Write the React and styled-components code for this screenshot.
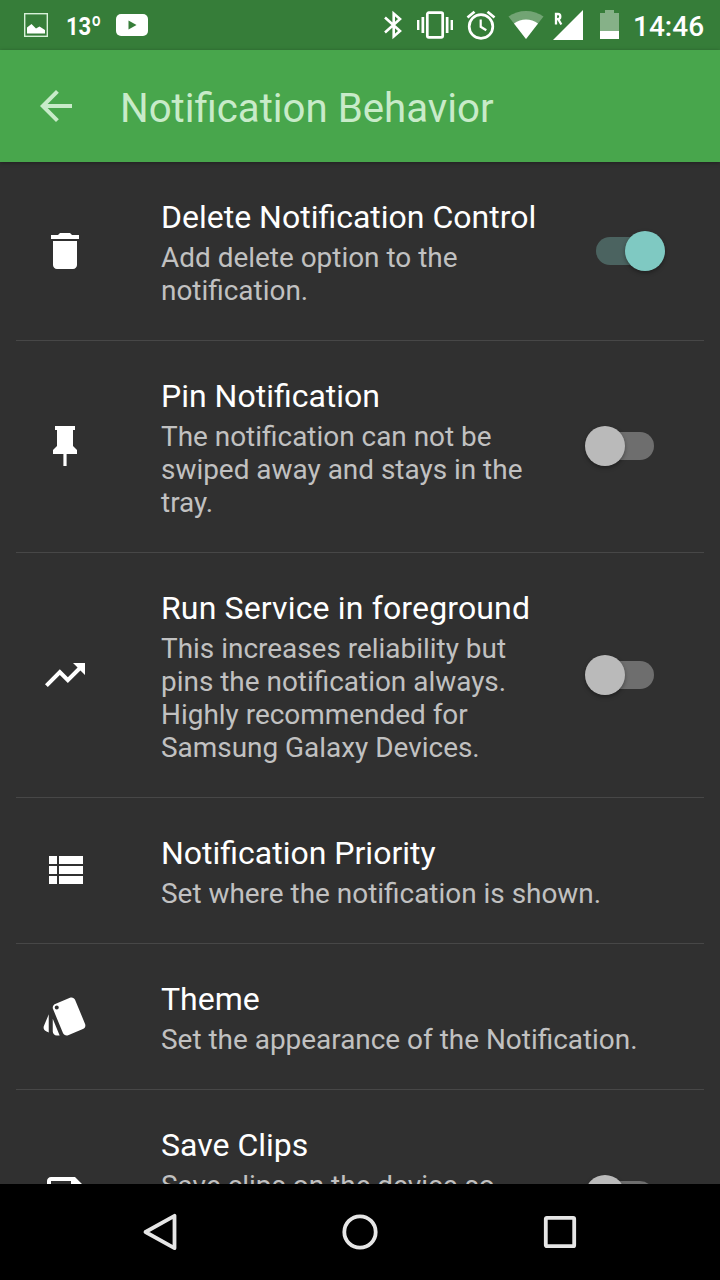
import React from 'react';
import styled, { createGlobalStyle } from 'styled-components';

const GlobalStyle = createGlobalStyle`
  *, *::before, *::after { box-sizing: border-box; }
  body {
    margin: 0;
    background: #303030;
    font-family: Roboto, "Noto Sans", sans-serif;
  }
  svg { display: block; flex: none; }
`;

const Screen = styled.div`
  display: flex;
  flex-direction: column;
  width: 720px;
  height: 1280px;
  overflow: hidden;
  background: #303030;
`;

const StatusBar = styled.header`
  flex: none;
  display: flex;
  align-items: center;
  justify-content: space-between;
  height: 50px;
  padding: 0 16px 0 24px;
  background: #367d39;
  color: #fff;
`;

const StatusGroup = styled.div`
  display: flex;
  align-items: center;
  height: 50px;
`;

const Temperature = styled.span`
  width: 36px;
  margin: 1px 14px 0 18px;
  font-size: 26.5px;
  font-weight: 700;
  line-height: 40px;
  white-space: nowrap;
  transform: scaleX(0.83);
  transform-origin: left center;
`;

const Clock = styled.span`
  width: 71px;
  margin: 3px 0 0 14px;
  font-size: 28px;
  font-weight: 500;
  line-height: 40px;
  white-space: nowrap;
`;

const StatusIcon = styled.svg`
  margin-left: ${({ $gap }) => $gap || 0}px;
`;

const AppBar = styled.div`
  flex: none;
  z-index: 1;
  display: flex;
  align-items: center;
  height: 112px;
  padding-left: 32px;
  background: #48a64c;
  color: #c8ebc9;
  box-shadow: 0 1px 4px rgba(0, 0, 0, 0.35);
`;

const Title = styled.h1`
  margin: 6px 0 0 40px;
  font-size: 40.2px;
  font-weight: 400;
  line-height: 48px;
`;

const List = styled.main`
  flex: 1;
  min-height: 0;
  overflow: hidden;
  padding: 0 16px;
`;

const Row = styled.section`
  display: flex;
  align-items: center;
  padding: 36px 39px 33px 25px;
  border-bottom: 1px solid #474747;
`;

const RowIcon = styled.svg`
  width: 48px;
  height: 48px;
  margin: -3.5px 72px 0 0;
  fill: #fff;
`;

const RowText = styled.div`
  width: ${({ $wide }) => ($wide ? 520 : 384)}px;
  flex: none;
`;

const RowTitle = styled.h2`
  margin: 0 0 5px;
  font-size: 32px;
  font-weight: 400;
  line-height: 38px;
  letter-spacing: ${({ $tracking }) => $tracking || 'normal'};
  color: #fff;
`;

const Description = styled.p`
  margin: 0;
  font-size: 27.93px;
  line-height: 33px;
  color: #c1c1c1;
`;

const Track = styled.div`
  display: flex;
  align-items: center;
  justify-content: ${({ $on }) => ($on ? 'flex-end' : 'flex-start')};
  width: 58px;
  height: 28px;
  margin: -3.5px 11px 0 auto;
  border-radius: 14px;
  background: ${({ $on }) => ($on ? '#4b6360' : '#6e6e6e')};
`;

const Thumb = styled.div`
  flex: none;
  width: 40px;
  height: 40px;
  margin: 0 -11px;
  border-radius: 50%;
  background: ${({ $on }) => ($on ? '#7fc9c2' : '#bababa')};
  box-shadow: 0 2px 4px rgba(0, 0, 0, 0.35);
`;

const NavBar = styled.nav`
  flex: none;
  display: flex;
  align-items: center;
  justify-content: center;
  gap: 152px;
  height: 96px;
  background: #000;
`;

const NavIcon = styled.svg`
  width: 48px;
  height: 48px;
  fill: none;
  stroke: #e6e6e6;
  stroke-width: 3.8;
  stroke-linejoin: round;
`;

const icons = {
  trash: 'M6 19c0 1.1.9 2 2 2h8c1.1 0 2-.9 2-2V7H6v12zM19 4h-3.5l-1-1h-5l-1 1H5v2h14V4z',
  pin: 'M16 12V4h1V2H7v2h1v8l-2 2v2h5.2v6h1.6v-6H18v-2l-2-2z',
  trend: 'M16 6l2.29 2.29-4.88 4.88-4-4L2 16.59 3.41 18l6-6 4 4 6.3-6.29L22 12V6z',
  list: 'M4 14h4v-4H4v4zm0 5h4v-4H4v4zM4 9h4V5H4v4zm5 5h12v-4H9v4zm0 5h12v-4H9v4zM9 5v4h12V5H9z',
  style:
    'M2.53 19.65l1.34.56v-9.03l-2.43 5.86c-.41 1.02.08 2.19 1.09 2.61zm19.5-3.7L17.07 3.98c-.31-.75-1.04-1.21-1.81-1.23-.26 0-.53.04-.79.15L7.1 5.95c-.75.31-1.21 1.03-1.23 1.8-.01.27.04.54.15.8l4.96 11.97c.31.76 1.05 1.22 1.83 1.23.26 0 .52-.05.77-.15l7.36-3.05c1.02-.42 1.51-1.59 1.1-2.6zM7.88 8.75c-.55 0-1-.45-1-1s.45-1 1-1 1 .45 1 1-.45 1-1 1zm-2 11c0 1.1.9 2 2 2h1.45l-3.45-8.34v6.34z',
  save: 'M17 3H5c-1.11 0-2 .9-2 2v14c0 1.1.89 2 2 2h14c1.1 0 2-.9 2-2V7l-4-4zm-5 16c-1.66 0-3-1.34-3-3s1.34-3 3-3 3 1.34 3 3-1.34 3-3 3zm3-10H5V5h10v4z',
};

const settings = [
  { icon: 'trash', title: 'Delete Notification Control', text: 'Add delete option to the notification.', toggle: true, on: true },
  { icon: 'pin', title: 'Pin Notification', text: 'The notification can not be swiped away and stays in the tray.', toggle: true },
  { icon: 'trend', title: 'Run Service in foreground', tracking: '0.15px', text: 'This increases reliability but pins the notification always. Highly recommended for Samsung Galaxy Devices.', toggle: true },
  { icon: 'list', title: 'Notification Priority', text: 'Set where the notification is shown.' },
  { icon: 'style', title: 'Theme', text: 'Set the appearance of the Notification.' },
  { icon: 'save', title: 'Save Clips', text: 'Save clips on the device so they are still available after a restart of the device.', toggle: true },
];

function Setting({ icon, title, tracking, text, toggle, on }) {
  return (
    <Row>
      <RowIcon viewBox="0 0 24 24"><path d={icons[icon]} /></RowIcon>
      <RowText $wide={!toggle}>
        <RowTitle $tracking={tracking}>{title}</RowTitle>
        <Description>{text}</Description>
      </RowText>
      {toggle && <Track $on={on}><Thumb $on={on} /></Track>}
    </Row>
  );
}

function StatusIcons() {
  return (
    <>
      <StatusIcon width="20" height="32" viewBox="0 0 20 32" fill="none" stroke="#fff" strokeWidth="2.6">
        <path d="M1 8.500L16 22L9.700 27.500V4.500L16 10L1 23.500" />
      </StatusIcon>
      <StatusIcon $gap={13} width="36" height="30" viewBox="0 0 36 30" fill="#fff">
        <path d="M0 10h2.400v10H0zM4.500 7h2.700v16H4.500zM28.800 7h2.700v16h-2.700zM33.600 10H36v10h-2.400z" />
        <rect x="10.300" y="2.700" width="15.400" height="24.600" rx="1.500" fill="none" stroke="#fff" strokeWidth="2.700" />
      </StatusIcon>
      <StatusIcon $gap={13} width="30" height="30" viewBox="0 0 30 30" fill="none" stroke="#fff" strokeWidth="2.700">
        <circle cx="15" cy="16.500" r="11.800" />
        <path d="M1.500 7.500L8.500 1.700M28.500 7.500L21.500 1.700" />
        <path d="M14.700 9.500v7.300l5.600 3.500" strokeWidth="2.200" />
      </StatusIcon>
      <StatusIcon $gap={12} width="36" height="30" viewBox="0 0 36 30" fill="#fff">
        <path d="M0.500 6.500C10-1 26-1 35.500 6.500L18 29z" opacity="0.300" />
        <path d="M6 13.500C13 8 23 8 30 13.500L18 29z" />
      </StatusIcon>
      <StatusIcon $gap={9} width="30" height="30" viewBox="0 0 30 30">
        <path d="M0 30L30 0V30z" fill="#fff" />
        <path d="M3 14.500V4h2a2.300 2.600 0 0 1 0 5.200H3M5.300 9.200L8.300 14.500" fill="none" stroke="#fff" strokeWidth="2.300" />
      </StatusIcon>
      <StatusIcon $gap={17} width="19" height="30" viewBox="0 0 19 30" fill="#fff">
        <path d="M0 3h5V0h9v3h5v18H0z" opacity="0.400" />
        <path d="M0 21h19v8H0z" />
      </StatusIcon>
    </>
  );
}

export default function App() {
  return (
    <Screen>
      <GlobalStyle />
      <StatusBar>
        <StatusGroup>
          <StatusIcon width="24" height="24" viewBox="0 0 24 24">
            <rect x="0.700" y="0.700" width="22.600" height="22.600" fill="none" stroke="#d7f0d8" strokeWidth="1.400" />
            <path d="M3 20.500V14.500L7.500 11L12 15.500L15.500 13.500L21 17V20.500z" fill="#fff" />
          </StatusIcon>
          <Temperature>13º</Temperature>
          <StatusIcon width="32" height="22" viewBox="0 0 32 22">
            <rect width="32" height="22" rx="5" fill="#fff" />
            <path d="M12.500 6.500v9l8-4.500z" fill="#367d39" />
          </StatusIcon>
        </StatusGroup>
        <StatusGroup>
          <StatusIcons />
          <Clock>14:46</Clock>
        </StatusGroup>
      </StatusBar>
      <AppBar>
        <svg width="48" height="48" viewBox="0 0 24 24" fill="#c8ebc9">
          <path d="M20 11H7.830l5.590-5.590L12 4l-8 8 8 8 1.410-1.410L7.830 13H20v-2z" />
        </svg>
        <Title>Notification Behavior</Title>
      </AppBar>
      <List>
        {settings.map((item) => <Setting key={item.title} {...item} />)}
      </List>
      <NavBar>
        <NavIcon viewBox="0 0 48 48"><path d="M9.500 24L38.500 7.800V40.200z" /></NavIcon>
        <NavIcon viewBox="0 0 48 48"><circle cx="24" cy="24" r="15.700" /></NavIcon>
        <NavIcon viewBox="0 0 48 48"><rect x="9.800" y="9.800" width="28.400" height="28.400" rx="1" /></NavIcon>
      </NavBar>
    </Screen>
  );
}
